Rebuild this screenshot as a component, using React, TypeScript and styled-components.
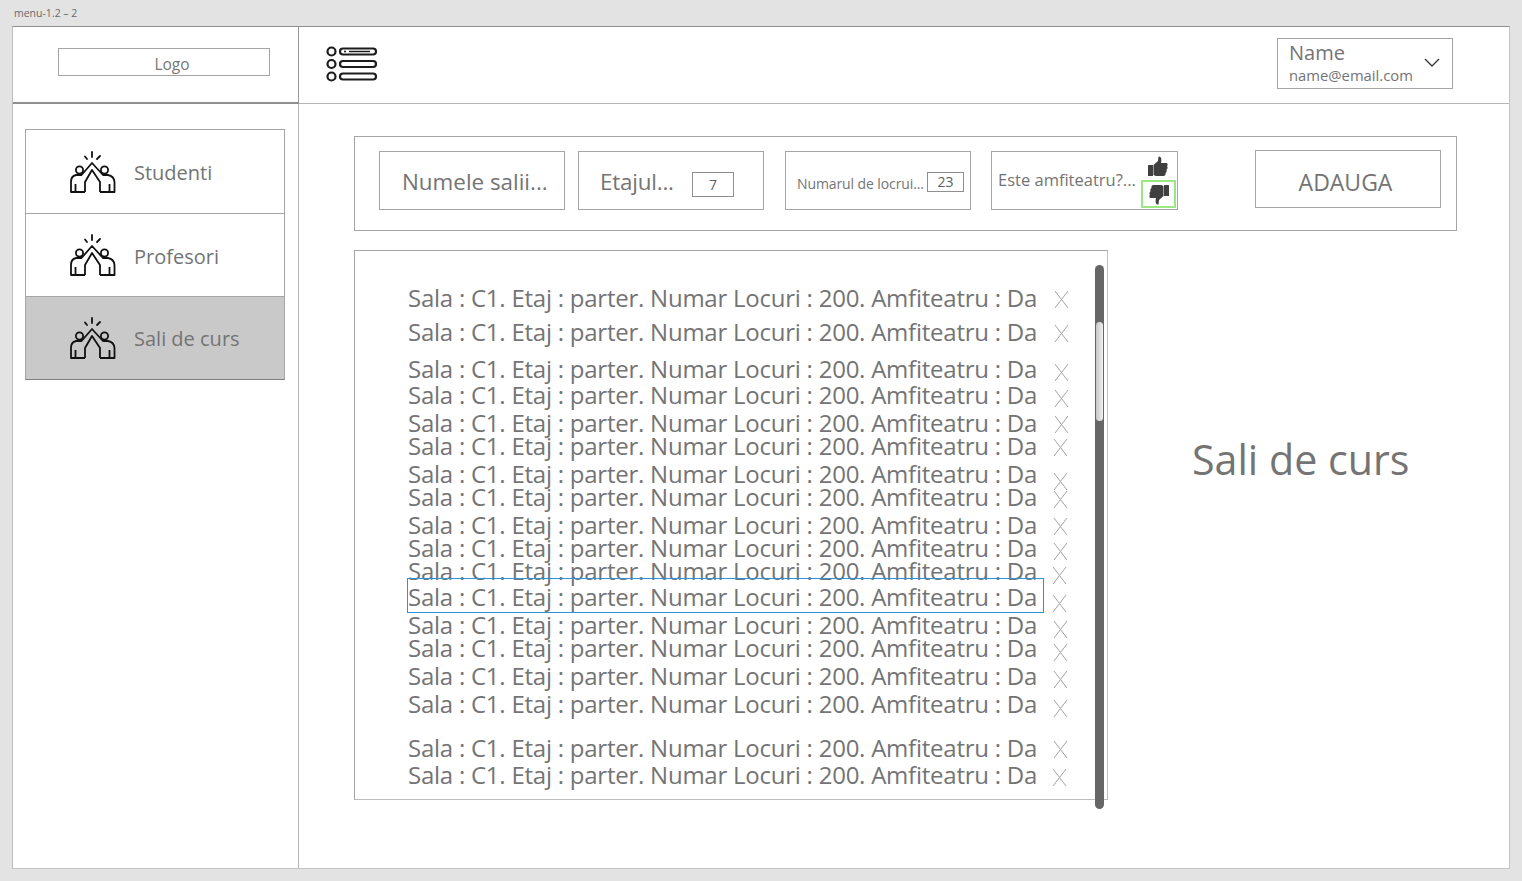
import React from "react";
import styled, { createGlobalStyle } from "styled-components";

const GlobalStyle = createGlobalStyle`
	html, body {
		margin: 0;
		height: 881px;
		overflow: hidden;
		background: #e3e3e3;
		font-family: "Open Sans", "Noto Sans", sans-serif;
		color: #747474;
	}
`;

const Page = styled.div`
	width: 1522px;
	height: 881px;
	padding: 0 12px 12px 12px;
	box-sizing: border-box;
	display: flex;
	flex-direction: column;
`;

const Caption = styled.div`
	height: 26px;
	line-height: 27px;
	padding-left: 2px;
	font-size: 10.5px;
	color: #6a6a6a;
`;

const Frame = styled.div`
	flex: 1;
	display: grid;
	grid-template-columns: 286px 1fr;
	grid-template-rows: 77px 1fr;
	background: #fff;
	border: 1px solid #a8a8a8;
	border-left-color: #bdbdbd;
	border-top-color: #8f8f8f;
	border-right-color: #c4c4c4;
	border-bottom-color: #c4c4c4;
`;

const LogoCell = styled.div`
	display: flex;
	align-items: flex-start;
	padding: 21px 0 0 45px;
	box-sizing: border-box;
	border-right: 1px solid #9a9a9a;
	border-bottom: 2px solid #8f8f8f;
`;

const LogoBox = styled.div`
	width: 212px;
	height: 28px;
	box-sizing: border-box;
	border: 1px solid #a5a5a5;
	padding-left: 16px;
	font-size: 15.5px;
	line-height: 31px;
	text-align: center;
	color: #777;
`;

const TopBar = styled.div`
	display: flex;
	align-items: center;
	justify-content: space-between;
	padding: 0 56px 0 27px;
	border-bottom: 1px solid #b5b5b5;
`;

const MenuGlyph = styled.svg`
	margin-top: -2px;
`;

const UserBox = styled.div`
	width: 176px;
	height: 51px;
	box-sizing: border-box;
	margin-top: -3px;
	border: 1px solid #a5a5a5;
	padding-left: 11px;
	position: relative;
`;

const UserName = styled.div`
	font-size: 20px;
	line-height: 27px;
`;

const UserMail = styled.div`
	font-size: 14.8px;
	line-height: 19px;
`;

const Chevron = styled.svg`
	position: absolute;
	right: 12px;
	top: 19px;
`;

const Sidebar = styled.nav`
	padding: 25px 13px 0 12px;
	border-right: 1px solid #b5b5b5;
	display: flex;
	flex-direction: column;
	align-items: stretch;
`;

const NavItem = styled.div<{ $active?: boolean; $h: number }>`
	height: ${(p) => p.$h}px;
	box-sizing: border-box;
	border: 1px solid #a5a5a5;
	border-bottom-color: #7f7f7f;
	margin-bottom: -1px;
	display: flex;
	align-items: center;
	gap: 18px;
	padding-left: 44px;
	font-size: 20px;
	background: ${(p) => (p.$active ? "#c9c9c9" : "#fff")};
`;

const NavLabel = styled.span<{ $low?: boolean }>`
	margin-top: ${(p) => (p.$low ? 2 : 0)}px;
`;

const Main = styled.main`
	padding: 32px 52px 0 55px;
	display: flex;
	flex-direction: column;
	gap: 19px;
`;

const FormBar = styled.div`
	height: 95px;
	box-sizing: border-box;
	border: 1px solid #a5a5a5;
	position: relative;
	display: flex;
	align-items: flex-start;
	padding: 14px 15px 0 24px;
`;

const Field = styled.div<{ $mr: number; $w?: number }>`
	width: ${(p) => p.$w ?? 186}px;
	height: 59px;
	box-sizing: border-box;
	border: 1px solid #a5a5a5;
	margin-right: ${(p) => p.$mr}px;
	display: flex;
	align-items: center;
	position: relative;
`;

const BigLabel = styled.span<{ $pl: number; $ls: number }>`
	font-size: 22.4px;
	padding-left: ${(p) => p.$pl}px;
	letter-spacing: ${(p) => p.$ls}px;
	margin-top: 2px;
	white-space: nowrap;
`;

const SmallLabel = styled.span`
	font-size: 14px;
	padding: 5px 0 0 11px;
	white-space: nowrap;
	letter-spacing: -0.1px;
`;

const MidLabel = styled.span`
	font-size: 16.5px;
	padding: 0 0 0 6px;
	white-space: nowrap;
	margin-top: -2px;
`;

const NumberBox = styled.div<{ $w: number; $left: number; $top: number }>`
	position: absolute;
	left: ${(p) => p.$left}px;
	top: ${(p) => p.$top}px;
	width: ${(p) => p.$w}px;
	height: ${(p) => (p.$w > 40 ? 25 : 20)}px;
	box-sizing: border-box;
	border: 1px solid #8e8e8e;
	font-size: 14px;
	text-align: center;
	line-height: ${(p) => (p.$w > 40 ? 24 : 18)}px;
	color: #5f5f5f;
`;

const ThumbSvg = styled.svg<{ $down?: boolean }>`
	width: 20px;
	height: 21px;
	fill: #3f3f3f;
	transform: ${(p) => (p.$down ? "rotate(180deg)" : "none")};
`;

const ThumbTop = styled.div`
	position: absolute;
	right: 9px;
	top: 4px;
	height: 21px;
`;

const ThumbBox = styled.div`
	position: absolute;
	right: 1px;
	top: 28px;
	width: 35px;
	height: 28px;
	box-sizing: border-box;
	border: 2px solid #9be882;
	display: flex;
	justify-content: center;
	align-items: center;
`;

const SubmitButton = styled.div`
	width: 186px;
	height: 58px;
	box-sizing: border-box;
	margin: -1px 0 0 auto;
	border: 1px solid #a5a5a5;
	padding-right: 5px;
	font-size: 23px;
	text-align: center;
	line-height: 62px;
`;

const Content = styled.div`
	display: flex;
	align-items: flex-start;
`;

const ListPanel = styled.div`
	width: 754px;
	height: 550px;
	box-sizing: border-box;
	border: 1px solid #a5a5a5;
	border-right-color: #c2c2c2;
	border-bottom-color: #bdbdbd;
	padding: 30px 0 0 52px;
	position: relative;
`;

const Row = styled.div<{ $h: number }>`
	height: ${(p) => p.$h}px;
	position: relative;
	font-size: 24px;
	letter-spacing: -0.24px;
	line-height: 34px;
	white-space: nowrap;
`;

const RowText = styled.div<{ $selected?: boolean }>`
	width: 637px;
	height: 34px;
	padding-left: 1px;
	box-sizing: border-box;
	position: relative;
	${(p) =>
		p.$selected
			? `&::after {
				content: "";
				position: absolute;
				left: 0;
				right: 0;
				top: -2px;
				height: 35px;
				box-sizing: border-box;
				border: 1px solid #2b93d8;
			}`
			: ""}
`;

const Cross = styled.svg<{ $x: number; $y: number }>`
	position: absolute;
	left: ${(p) => p.$x}px;
	top: ${(p) => p.$y}px;
`;

const ScrollTrack = styled.div`
	position: absolute;
	left: 740px;
	top: 14px;
	width: 9px;
	height: 544px;
	border-radius: 5px;
	background: #666;
`;

const ScrollThumb = styled.div`
	position: absolute;
	left: 1px;
	top: 57px;
	width: 7px;
	height: 99px;
	border-radius: 4px;
	background: linear-gradient(90deg, #c6c6c6, #f1f1f1);
`;

const Heading = styled.h1`
	margin: 175px 0 0 84px;
	font-size: 41.2px;
	font-weight: 400;
	line-height: 68px;
	color: #747474;
`;

const MenuIcon = () => (
	<MenuGlyph width="52" height="36" viewBox="0 0 52 36" fill="none" stroke="#1c1c1c" strokeWidth="2.2">
		<circle cx="5.5" cy="5.5" r="4" />
		<circle cx="5.5" cy="18" r="4" />
		<circle cx="5.5" cy="30.5" r="4" />
		<rect x="14" y="2.5" width="36" height="6" rx="3" />
		<rect x="14" y="15" width="36" height="6" rx="3" />
		<rect x="14" y="27.5" width="36" height="6" rx="3" />
		<path d="M18 5.5h2M23 5.5h21" strokeWidth="1.6" />
	</MenuGlyph>
);

const HighFiveIcon = () => (
	<svg width="46" height="42" viewBox="0 0 46 42" fill="none" stroke="#111" strokeWidth="1.8" strokeLinejoin="round">
		<path d="M22 1v5M15 5.500l2 2.500M30 5l-3 3" strokeLinecap="round" />
		<circle cx="9.500" cy="19" r="3.600" />
		<circle cx="34.500" cy="19" r="3.600" />
		<path d="M15 41H1V31Q1 25 6 24H11.500L22 12 33 24H38Q44 25 44.500 31V41H30" />
		<path d="M15 41V31L22 19 30 31V41" />
		<path d="M5.500 33v8M39.500 33v8" />
	</svg>
);

const ThumbIcon = ({ down }: { down?: boolean }) => (
	<ThumbSvg $down={down} viewBox="0 0 20 21">
		<rect x="0" y="9" width="5" height="11" rx="0.5" />
		<path d="M5.500 9L10 5L10.500.5C13 0 14 3 13 7H18C20 7 20 9.500 19 10C20 11 19.500 13 18.500 13.500C19 15 18.500 16.500 17.500 17C17.800 19 17 20 15.500 20H9C7.500 20 6.500 19.500 5.500 19Z" />
	</ThumbSvg>
);

const CrossIcon = ({ x, y }: { x: number; y: number }) => (
	<Cross $x={x} $y={y} width="15" height="19" viewBox="0 0 15 19" stroke="#a3a3a3" strokeWidth="1" fill="none">
		<path d="M1 1l13 17M14 1L1 18" />
	</Cross>
);

const rows = [
	{ h: 34, x: 647, y: 9 },
	{ h: 37, x: 647, y: 9 },
	{ h: 26, x: 647, y: 11 },
	{ h: 28, x: 647, y: 11 },
	{ h: 23, x: 647, y: 9 },
	{ h: 28, x: 646, y: 9 },
	{ h: 23, x: 646, y: 15 },
	{ h: 28, x: 646, y: 10 },
	{ h: 23, x: 646, y: 9 },
	{ h: 23, x: 646, y: 11 },
	{ h: 26, x: 645, y: 12 },
	{ h: 28, x: 645, y: 14, selected: true },
	{ h: 23, x: 646, y: 12 },
	{ h: 28, x: 646, y: 12 },
	{ h: 28, x: 646, y: 11 },
	{ h: 44, x: 646, y: 12 },
	{ h: 27, x: 646, y: 9 },
	{ h: 27, x: 645, y: 10 },
];

const App = () => (
	<Page>
		<GlobalStyle />
		<Caption>menu-1.2 – 2</Caption>
		<Frame>
			<LogoCell>
				<LogoBox>Logo</LogoBox>
			</LogoCell>
			<TopBar>
				<MenuIcon />
				<UserBox>
					<UserName>Name</UserName>
					<UserMail>name@email.com</UserMail>
					<Chevron width="16" height="10" viewBox="0 0 16 10" fill="none" stroke="#333" strokeWidth="1.3">
						<path d="M1 1l7 7 7-7" />
					</Chevron>
				</UserBox>
			</TopBar>
			<Sidebar>
				<NavItem $h={85}>
					<HighFiveIcon />
					<NavLabel $low>Studenti</NavLabel>
				</NavItem>
				<NavItem $h={84}>
					<HighFiveIcon />
					<NavLabel $low>Profesori</NavLabel>
				</NavItem>
				<NavItem $h={84} $active>
					<HighFiveIcon />
					<NavLabel>Sali de curs</NavLabel>
				</NavItem>
			</Sidebar>
			<Main>
				<FormBar>
					<Field $mr={13}>
						<BigLabel $pl={22} $ls={0}>Numele salii...</BigLabel>
					</Field>
					<Field $mr={21}>
						<BigLabel $pl={21} $ls={-0.2}>Etajul...</BigLabel>
						<NumberBox $w={42} $left={113} $top={20}>7</NumberBox>
					</Field>
					<Field $mr={20}>
						<SmallLabel>Numarul de locrui...</SmallLabel>
						<NumberBox $w={37} $left={141} $top={20}>23</NumberBox>
					</Field>
					<Field $mr={0} $w={187}>
						<MidLabel>Este amfiteatru?...</MidLabel>
						<ThumbTop>
							<ThumbIcon />
						</ThumbTop>
						<ThumbBox>
							<ThumbIcon down />
						</ThumbBox>
					</Field>
					<SubmitButton>ADAUGA</SubmitButton>
				</FormBar>
				<Content>
					<ListPanel>
						{rows.map((r, i) => (
							<Row key={i} $h={r.h}>
								<RowText $selected={r.selected}>Sala : C1. Etaj : parter. Numar Locuri : 200. Amfiteatru : Da</RowText>
								<CrossIcon x={r.x} y={r.y} />
							</Row>
						))}
						<ScrollTrack>
							<ScrollThumb />
						</ScrollTrack>
					</ListPanel>
					<Heading>Sali de curs</Heading>
				</Content>
			</Main>
		</Frame>
	</Page>
);

export default App;
